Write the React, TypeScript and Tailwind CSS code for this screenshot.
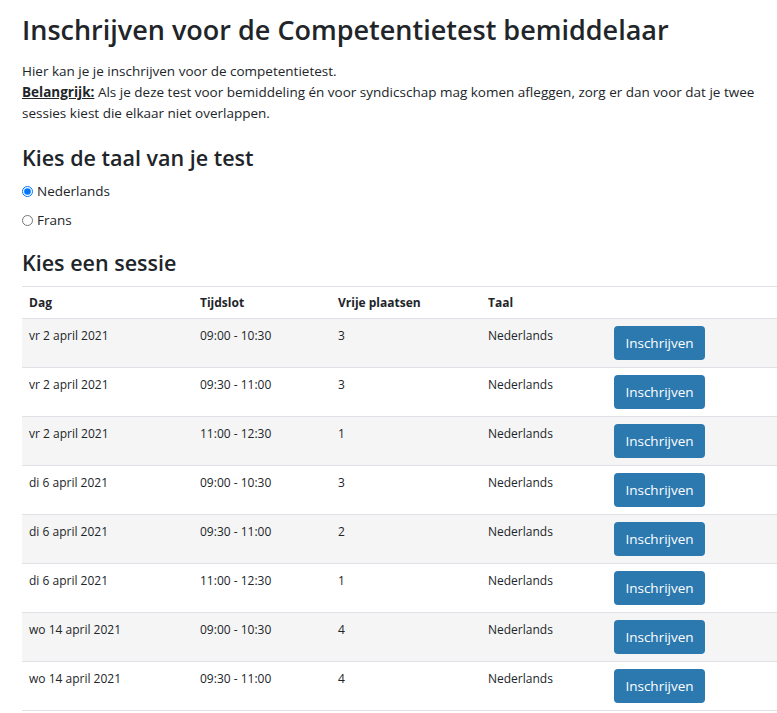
import React, { useState } from "react";

type Session = {
  dag: string;
  tijdslot: string;
  vrij: number;
  taal: string;
};

const sessions: Session[] = [
  { dag: "vr 2 april 2021", tijdslot: "09:00 - 10:30", vrij: 3, taal: "Nederlands" },
  { dag: "vr 2 april 2021", tijdslot: "09:30 - 11:00", vrij: 3, taal: "Nederlands" },
  { dag: "vr 2 april 2021", tijdslot: "11:00 - 12:30", vrij: 1, taal: "Nederlands" },
  { dag: "di 6 april 2021", tijdslot: "09:00 - 10:30", vrij: 3, taal: "Nederlands" },
  { dag: "di 6 april 2021", tijdslot: "09:30 - 11:00", vrij: 2, taal: "Nederlands" },
  { dag: "di 6 april 2021", tijdslot: "11:00 - 12:30", vrij: 1, taal: "Nederlands" },
  { dag: "wo 14 april 2021", tijdslot: "09:00 - 10:30", vrij: 4, taal: "Nederlands" },
  { dag: "wo 14 april 2021", tijdslot: "09:30 - 11:00", vrij: 4, taal: "Nederlands" },
];

export default function App() {
  const [taal, setTaal] = useState("nl");

  return (
    <div
      className="min-h-screen overflow-hidden bg-white pl-[22px] text-[13.5px] leading-[21px] text-[#212529]"
      style={{ fontFamily: '"Open Sans", "Noto Sans", sans-serif' }}
    >
      <h1 className="pt-[10px] text-[27px] leading-[40px] font-semibold">
        Inschrijven voor de Competentietest bemiddelaar
      </h1>

      <div className="mt-[11px] w-[760px]">
        <p>Hier kan je je inschrijven voor de competentietest.</p>
        <p>
          <strong className="font-bold underline">Belangrijk:</strong> Als je deze test voor bemiddeling én voor
          syndicschap mag komen afleggen, zorg er dan voor dat je twee sessies kiest die elkaar niet overlappen.
        </p>
      </div>

      <h2 className="mt-[19px] text-[21.5px] leading-[30px] font-semibold">Kies de taal van je test</h2>

      <div className="mt-[8px] flex flex-col gap-[8px]">
        <label className="flex items-center gap-[4px]">
          <input
            type="radio"
            name="taal"
            checked={taal === "nl"}
            onChange={() => setTaal("nl")}
            className="m-0 h-[11px] w-[11px] accent-[#0075ff]"
          />
          Nederlands
        </label>
        <label className="flex items-center gap-[4px]">
          <input
            type="radio"
            name="taal"
            checked={taal === "fr"}
            onChange={() => setTaal("fr")}
            className="m-0 h-[11px] w-[11px] accent-[#0075ff]"
          />
          Frans
        </label>
      </div>

      <h2 className="mt-[17px] text-[21.5px] leading-[30px] font-semibold">Kies een sessie</h2>

      <table className="mt-[8px] w-[755px] table-fixed border-collapse text-[12px]">
        <thead>
          <tr className="border-y border-[#dee2e6] text-left">
            <th className="w-[171px] px-[7px] py-[6px] font-bold leading-[19px]">Dag</th>
            <th className="w-[138px] px-[7px] py-[6px] font-bold leading-[19px]">Tijdslot</th>
            <th className="w-[150px] px-[7px] py-[6px] font-bold leading-[19px]">Vrije plaatsen</th>
            <th className="w-[126px] px-[7px] py-[6px] font-bold leading-[19px]">Taal</th>
            <th className="px-[7px] py-[6px]"></th>
          </tr>
        </thead>
        <tbody>
          {sessions.map((s, i) => (
            <tr
              key={i}
              className={`border-b border-[#dee2e6] align-top ${i % 2 === 0 ? "bg-[#f5f5f5]" : "bg-white"}`}
            >
              <td className="px-[7px] pt-[7px] leading-[20px]">{s.dag}</td>
              <td className="px-[7px] pt-[7px] leading-[20px]">{s.tijdslot}</td>
              <td className="px-[7px] pt-[7px] leading-[20px]">{s.vrij}</td>
              <td className="px-[7px] pt-[7px] leading-[20px]">{s.taal}</td>
              <td className="px-[7px] pt-[7px] pb-[7px]">
                <button className="h-[34px] w-[91px] rounded-[4px] bg-[#2c79b0] text-[13.5px] text-white">
                  Inschrijven
                </button>
              </td>
            </tr>
          ))}
        </tbody>
      </table>
    </div>
  );
}
